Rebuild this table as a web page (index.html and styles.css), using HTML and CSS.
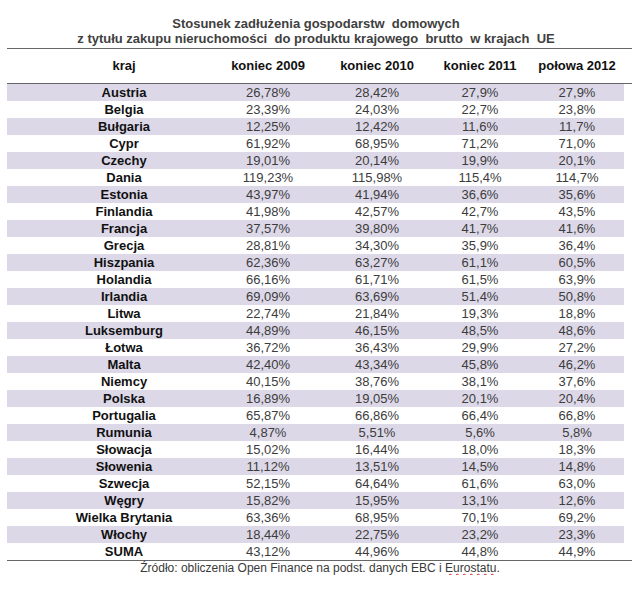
FILE: index.html
```html
<!DOCTYPE html>
<html lang="pl">
<head>
<meta charset="utf-8">
<title>Stosunek zadłużenia</title>
<link rel="stylesheet" href="styles.css">
</head>
<body>
<div class="page">
  <div class="title">
    <div>Stosunek zadłużenia gospodarstw&nbsp; domowych</div>
    <div>z tytułu zakupu nieruchomości&nbsp; do produktu krajowego&nbsp; brutto&nbsp; w krajach&nbsp; UE</div>
  </div>
  <div class="table">
    <div class="row head">
      <div>kraj</div><div>koniec 2009</div><div>koniec 2010</div><div>koniec 2011</div><div>połowa 2012</div>
    </div>
    <div class="body">
      <div class="row"><div class="c">Austria</div><div>26,78%</div><div>28,42%</div><div>27,9%</div><div>27,9%</div></div>
      <div class="row"><div class="c">Belgia</div><div>23,39%</div><div>24,03%</div><div>22,7%</div><div>23,8%</div></div>
      <div class="row"><div class="c">Bułgaria</div><div>12,25%</div><div>12,42%</div><div>11,6%</div><div>11,7%</div></div>
      <div class="row"><div class="c">Cypr</div><div>61,92%</div><div>68,95%</div><div>71,2%</div><div>71,0%</div></div>
      <div class="row"><div class="c">Czechy</div><div>19,01%</div><div>20,14%</div><div>19,9%</div><div>20,1%</div></div>
      <div class="row"><div class="c">Dania</div><div>119,23%</div><div>115,98%</div><div>115,4%</div><div>114,7%</div></div>
      <div class="row"><div class="c">Estonia</div><div>43,97%</div><div>41,94%</div><div>36,6%</div><div>35,6%</div></div>
      <div class="row"><div class="c">Finlandia</div><div>41,98%</div><div>42,57%</div><div>42,7%</div><div>43,5%</div></div>
      <div class="row"><div class="c">Francja</div><div>37,57%</div><div>39,80%</div><div>41,7%</div><div>41,6%</div></div>
      <div class="row"><div class="c">Grecja</div><div>28,81%</div><div>34,30%</div><div>35,9%</div><div>36,4%</div></div>
      <div class="row"><div class="c">Hiszpania</div><div>62,36%</div><div>63,27%</div><div>61,1%</div><div>60,5%</div></div>
      <div class="row"><div class="c">Holandia</div><div>66,16%</div><div>61,71%</div><div>61,5%</div><div>63,9%</div></div>
      <div class="row"><div class="c">Irlandia</div><div>69,09%</div><div>63,69%</div><div>51,4%</div><div>50,8%</div></div>
      <div class="row"><div class="c">Litwa</div><div>22,74%</div><div>21,84%</div><div>19,3%</div><div>18,8%</div></div>
      <div class="row"><div class="c">Luksemburg</div><div>44,89%</div><div>46,15%</div><div>48,5%</div><div>48,6%</div></div>
      <div class="row"><div class="c">Łotwa</div><div>36,72%</div><div>36,43%</div><div>29,9%</div><div>27,2%</div></div>
      <div class="row"><div class="c">Malta</div><div>42,40%</div><div>43,34%</div><div>45,8%</div><div>46,2%</div></div>
      <div class="row"><div class="c">Niemcy</div><div>40,15%</div><div>38,76%</div><div>38,1%</div><div>37,6%</div></div>
      <div class="row"><div class="c">Polska</div><div>16,89%</div><div>19,05%</div><div>20,1%</div><div>20,4%</div></div>
      <div class="row"><div class="c">Portugalia</div><div>65,87%</div><div>66,86%</div><div>66,4%</div><div>66,8%</div></div>
      <div class="row"><div class="c">Rumunia</div><div>4,87%</div><div>5,51%</div><div>5,6%</div><div>5,8%</div></div>
      <div class="row"><div class="c">Słowacja</div><div>15,02%</div><div>16,44%</div><div>18,0%</div><div>18,3%</div></div>
      <div class="row"><div class="c">Słowenia</div><div>11,12%</div><div>13,51%</div><div>14,5%</div><div>14,8%</div></div>
      <div class="row"><div class="c">Szwecja</div><div>52,15%</div><div>64,64%</div><div>61,6%</div><div>63,0%</div></div>
      <div class="row"><div class="c">Węgry</div><div>15,82%</div><div>15,95%</div><div>13,1%</div><div>12,6%</div></div>
      <div class="row"><div class="c">Wielka Brytania</div><div>63,36%</div><div>68,95%</div><div>70,1%</div><div>69,2%</div></div>
      <div class="row"><div class="c">Włochy</div><div>18,44%</div><div>22,75%</div><div>23,2%</div><div>23,3%</div></div>
      <div class="row"><div class="c">SUMA</div><div>43,12%</div><div>44,96%</div><div>44,8%</div><div>44,9%</div></div>
    </div>
  </div>
  <div class="source">Źródło: obliczenia Open Finance na podst. danych EBC i <span class="spell">Eurostatu</span>.</div>
</div>
</body>
</html>
```

FILE: styles.css
```css
html, body {
  margin: 0;
  padding: 0;
  background: #ffffff;
}

.page {
  width: 632px;
  font-family: "Liberation Sans", Arial, sans-serif;
  font-size: 13px;
}

.title {
  padding-top: 16px;
  padding-bottom: 2px;
  text-align: center;
  font-weight: bold;
  line-height: 15px;
  color: #404040;
}

.table {
  margin-left: 7px;
  border-top: 1px solid #666666;
  border-bottom: 1px solid #666666;
}

.row {
  display: grid;
  grid-template-columns: 176px 112px 106px 100px 94px;
  padding-left: 29px;
  width: 588px;
  height: 17px;
  line-height: 17px;
  justify-items: center;
  color: #3c3c3c;
  white-space: nowrap;
}

.row.head {
  height: 34px;
  line-height: 34px;
  font-weight: bold;
  color: #111111;
  border-bottom: 1px solid #666666;
  width: auto;
}

.body .row:nth-child(odd) {
  background: #dcd8e8;
}

.row .c {
  font-weight: bold;
  color: #111111;
}

.source {
  text-align: center;
  font-size: 12px;
  line-height: 14px;
  color: #3a3a3a;
  padding-left: 8px;
}

.spell {
  text-decoration: underline wavy #d02020;
  text-decoration-thickness: 1px;
}
```
